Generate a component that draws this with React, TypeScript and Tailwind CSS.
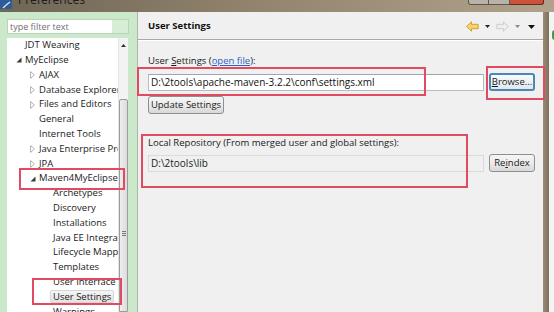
import React from "react";

type TreeNode = { label: string; level: 1 | 2 | 3; arrow?: "open" | "closed"; selected?: boolean };

const nodes: TreeNode[] = [
  { label: "JDT Weaving", level: 1 },
  { label: "MyEclipse", level: 1, arrow: "open" },
  { label: "AJAX", level: 2, arrow: "closed" },
  { label: "Database Explorer", level: 2, arrow: "closed" },
  { label: "Files and Editors", level: 2, arrow: "closed" },
  { label: "General", level: 2 },
  { label: "Internet Tools", level: 2 },
  { label: "Java Enterprise Project", level: 2, arrow: "closed" },
  { label: "JPA", level: 2, arrow: "closed" },
  { label: "Maven4MyEclipse", level: 2, arrow: "open" },
  { label: "Archetypes", level: 3 },
  { label: "Discovery", level: 3 },
  { label: "Installations", level: 3 },
  { label: "Java EE Integration", level: 3 },
  { label: "Lifecycle Mappings", level: 3 },
  { label: "Templates", level: 3 },
  { label: "User Interface", level: 3 },
  { label: "User Settings", level: 3, selected: true },
  { label: "Warnings", level: 3 },
];

const indent = { 1: "pl-[4px]", 2: "pl-[18px]", 3: "pl-[32px]" };

function Arrow({ kind }: { kind: "open" | "closed" }) {
  if (kind === "open")
    return (
      <svg width="6" height="6" viewBox="0 0 6 6">
        <polygon points="5.5,0.5 5.5,5.5 0.5,5.5" fill="#3a3a3a" />
      </svg>
    );
  return (
    <svg width="5" height="8" viewBox="0 0 5 8">
      <polygon points="0.6,0.6 4.4,4 0.6,7.4" fill="#fff" stroke="#a8a8a8" strokeWidth="0.9" />
    </svg>
  );
}

function TitleBar() {
  return (
    <div className="h-[12px] flex bg-gradient-to-r from-[#6f6656] via-[#95866f] to-[#b0a28b] relative">
      <div className="w-[12px] h-[9px] bg-[#2c5c9a] rounded-br-[2px] flex items-end justify-center">
        <svg width="9" height="8" viewBox="0 0 9 8">
          <path d="M1 7 C3 5 5 3 8 1" stroke="#dfe8f5" strokeWidth="1.3" fill="none" />
        </svg>
      </div>
      <span className="ml-[6px] -mt-[6px] h-[12px] text-[12px] leading-[12px] text-[#1d1d1d]">Preferences</span>
      <div className="ml-auto mr-[10px] flex h-[5px]">
        <div className="w-[21px] bg-[#b9b2a8] border border-t-0 border-[#5d564c] rounded-bl-[3px]" />
        <div className="w-[21px] bg-[#b9b2a8] border border-t-0 border-l-0 border-[#5d564c]" />
        <div className="w-[34px] bg-[#c9533b] border border-t-0 border-l-0 border-[#6d2a1c] rounded-br-[3px]" />
      </div>
    </div>
  );
}

function FilterBox() {
  return (
    <div className="w-[122px] h-[15px] flex border border-[#b9d4b9]">
      <div className="flex-1 bg-white flex items-center pl-[2px] text-[9px] text-[#707070]">type filter text</div>
      <div className="w-[16px] bg-[#d6eed6]" />
    </div>
  );
}

function Tree() {
  return (
    <div className="mt-[4px] w-[121px] flex-1 flex bg-white overflow-hidden">
      <div className="w-[111px] overflow-hidden">
        {nodes.map((n) => (
          <div key={n.label} className={`h-[14.8px] flex items-center whitespace-nowrap ${indent[n.level]}`}>
            <div className="w-[14px] shrink-0 pl-[5px] flex items-center">{n.arrow && <Arrow kind={n.arrow} />}</div>
            {n.selected ? (
              <span className="shrink-0 -ml-[3px] px-[2px] h-[13px] flex items-center bg-gradient-to-b from-[#f4f4f4] to-[#e3e3e3] border border-[#d6d6d6] rounded-[2px] text-[#1a1a1a]">
                {n.label}
              </span>
            ) : (
              <span className="shrink-0 text-[#1a1a1a]">{n.label}</span>
            )}
          </div>
        ))}
      </div>
      <div className="w-[10px] flex flex-col bg-[#f3f3f3] border-l border-[#e4e4e4]">
        <div className="h-[14px] flex items-center justify-center">
          <svg width="5" height="3" viewBox="0 0 5 3">
            <polygon points="0,3 2.5,0 5,3" fill="#333" />
          </svg>
        </div>
        <div className="h-[47px]" />
        <div className="flex-1 bg-gradient-to-r from-[#eeeeee] to-[#dcdcdc] border border-[#9c9c9c] rounded-t-[2px] flex flex-col items-center pt-[131px]">
          <div className="w-[4px] h-px bg-[#777]" />
          <div className="w-[4px] h-px bg-[#777] mt-px" />
          <div className="w-[4px] h-px bg-[#777] mt-px" />
        </div>
      </div>
    </div>
  );
}

function Toolbar() {
  return (
    <div className="flex items-center">
      <svg width="13" height="11" viewBox="0 0 13 11">
        <polygon points="0.6,5.5 5.5,0.8 5.5,3.3 12.2,3.3 12.2,7.7 5.5,7.7 5.5,10.2" fill="#f7d46b" stroke="#cc9a2c" strokeWidth="0.9" />
      </svg>
      <svg className="ml-[6px]" width="5" height="3" viewBox="0 0 5 3">
        <polygon points="0,0 5,0 2.5,3" fill="#222" />
      </svg>
      <svg className="ml-[6px]" width="13" height="11" viewBox="0 0 13 11">
        <polygon points="12.4,5.5 7.5,0.8 7.5,3.3 0.8,3.3 0.8,7.7 7.5,7.7 7.5,10.2" fill="#eeeeee" stroke="#c9c9c9" strokeWidth="0.9" />
      </svg>
      <svg className="ml-[6px]" width="5" height="3" viewBox="0 0 5 3">
        <polygon points="0,0 5,0 2.5,3" fill="#888" />
      </svg>
      <svg className="ml-[8px]" width="7" height="4" viewBox="0 0 7 4">
        <polygon points="0,0 7,0 3.5,4" fill="#111" />
      </svg>
    </div>
  );
}

function Button({ children, focused, w }: { children: React.ReactNode; focused?: boolean; w: string }) {
  return (
    <div
      className={`${w} h-[18px] flex items-center justify-center rounded-[3px] text-[9.5px] text-[#1a1a1a] ${
        focused
          ? "border-2 border-[#4a88b4] bg-gradient-to-b from-[#f8fafc] to-[#e2e8ee]"
          : "border border-[#8f8f8f] bg-gradient-to-b from-[#f6f6f6] via-[#ebebeb] to-[#d8d8d8]"
      }`}
    >
      {children}
    </div>
  );
}

function SettingsPanel() {
  return (
    <div className="w-[406px] bg-[#f0f0f0] border-l border-[#a8b8a8] flex flex-col">
      <div className="h-[27px] pt-[2px] pl-[10px] pr-[8px] flex items-center justify-between">
        <span className="font-bold text-[9.5px] text-[#111]">User Settings</span>
        <Toolbar />
      </div>
      <div className="h-px bg-[#a8a8a8]" />
      <div className="h-px bg-white" />
      <div className="pl-[10px] pr-[8px] pt-[13px] flex flex-col">
        <div className="h-[14px] flex items-center text-[9.5px] text-[#1a1a1a]">
          User&nbsp;<span className="underline">S</span>ettings (<span className="text-[#2d5fc4] underline">open file</span>):
        </div>
        <div className="mt-[5px] flex items-center">
          <div className="w-[337px] h-[17px] bg-white border border-[#b7bcc4] border-t-[#a0a5ae] flex items-center pl-[2px] text-[10px] text-[#111]">
            D:\2tools\apache-maven-3.2.2\conf\settings.xml
          </div>
          <div className="ml-[5px]">
            <Button w="w-[46px]" focused>
              <span className="underline">B</span>rowse...
            </Button>
          </div>
        </div>
        <div className="mt-[5px]">
          <Button w="w-[76px]">Update Settings</Button>
        </div>
        <div className="mt-[22px] h-[14px] flex items-center text-[9.5px] text-[#1a1a1a]">
          Local Repository (From merged user and global settings):
        </div>
        <div className="mt-[4px] flex items-center">
          <div className="w-[336px] h-[17px] bg-[#f0f0f0] border border-[#dadada] flex items-center pl-[2px] text-[10px] text-[#222]">
            D:\2tools\lib
          </div>
          <div className="ml-[5px]">
            <Button w="w-[46px]">
              Re<span className="underline">i</span>ndex
            </Button>
          </div>
        </div>
      </div>
    </div>
  );
}

function Marks() {
  const box = "absolute border-2 border-solid border-[#e24a62] bg-transparent pointer-events-none";
  return (
    <>
      <div className={`${box} left-[137px] top-[67px] w-[289px] h-[29px]`} />
      <div className={`${box} left-[486px] top-[66px] w-[59px] h-[34px]`} />
      <div className={`${box} left-[141px] top-[134px] w-[327px] h-[54px]`} />
      <div className={`${box} left-[19px] top-[168px] w-[106px] h-[22px]`} />
      <div className={`${box} left-[32px] top-[278px] w-[90px] h-[27px]`} />
    </>
  );
}

export default function App() {
  return (
    <div className="relative w-[554px] h-[312px] overflow-hidden bg-[#c9e6c9] font-['Open_Sans','Liberation_Sans',sans-serif] text-[9.5px]">
      <TitleBar />
      <div className="flex h-[300px]">
        <div className="w-[137px] bg-[#cbe8cb] pl-[7px] pt-[7px] flex flex-col">
          <FilterBox />
          <Tree />
        </div>
        <SettingsPanel />
        <div className="w-[6px] bg-gradient-to-r from-[#9a8c76] to-[#7e715e]" />
        <div className="flex-1 bg-[#f4f5f2] relative">
          <div className="absolute left-[3px] top-[18px] w-[6px] h-[10px] rounded-full bg-[#3f9a48]" />
        </div>
      </div>
      <Marks />
    </div>
  );
}
